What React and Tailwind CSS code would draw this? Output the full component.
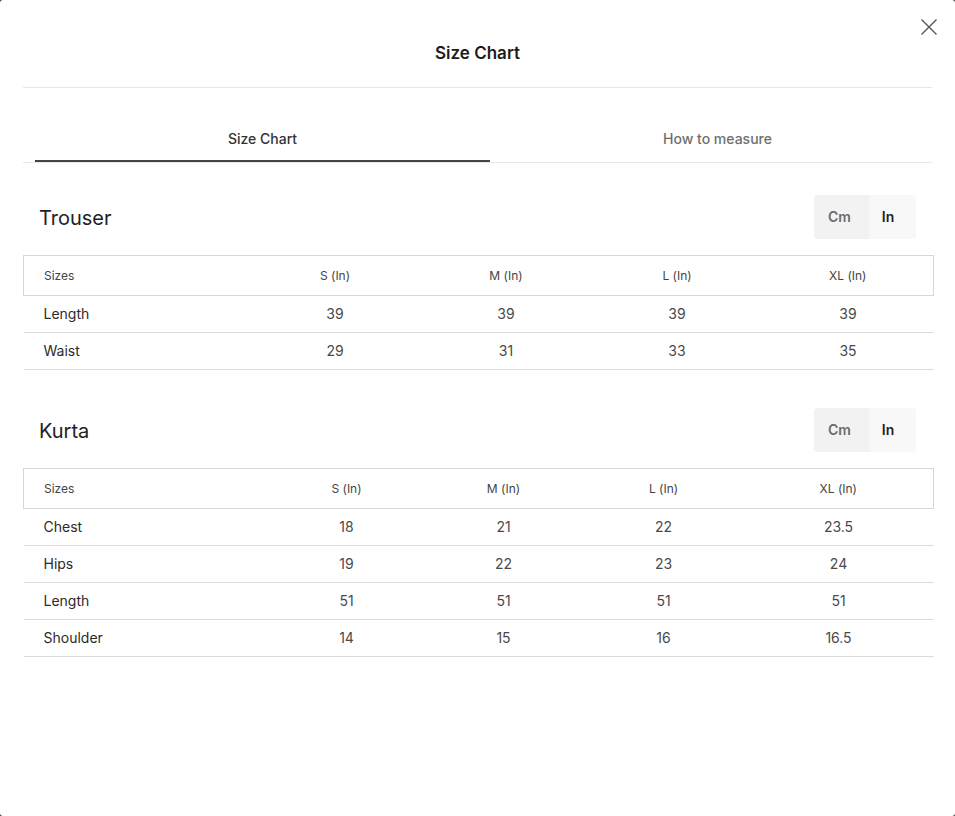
import { useState } from "react";

const charts = [
  {
    name: "Trouser",
    cols: ["226px", "171px", "171px", "171px", "171px"],
    rows: [
      ["Length", "39", "39", "39", "39"],
      ["Waist", "29", "31", "33", "35"],
    ],
  },
  {
    name: "Kurta",
    cols: ["246px", "154px", "160px", "160px", "190px"],
    rows: [
      ["Chest", "18", "21", "22", "23.5"],
      ["Hips", "19", "22", "23", "24"],
      ["Length", "51", "51", "51", "51"],
      ["Shoulder", "14", "15", "16", "16.5"],
    ],
  },
];

const sizes = ["S", "M", "L", "XL"];

const UnitToggle = () => {
  return (
    <div className="flex h-11 rounded-[4px] overflow-hidden text-sm font-semibold">
      <button className="w-[55px] pr-1 bg-[#f2f2f2] text-[#6b6b6b]">Cm</button>
      <button className="w-[47px] pr-[9px] bg-[#f8f8f8] text-[#222]">In</button>
    </div>
  );
};

const Chart = ({ chart, first }) => {
  return (
    <section className={first ? "mt-8" : "mt-[38px]"}>
      <div className="flex items-center justify-between px-4 h-11">
        <h2 className="text-[20px] text-[#222] pt-[2px]">{chart.name}</h2>
        <UnitToggle />
      </div>
      <table className="table-fixed w-full mt-4 border-collapse">
        <colgroup>
          {chart.cols.map((w, i) => (
            <col key={i} style={{ width: w }} />
          ))}
        </colgroup>
        <thead>
          <tr className="h-10 border border-[#d6d6d6] text-xs text-[#444]">
            <th className="text-left font-normal pl-5">Sizes</th>
            {sizes.map((s) => (
              <th key={s} className="font-normal text-center">
                {s} (In)
              </th>
            ))}
          </tr>
        </thead>
        <tbody>
          {chart.rows.map((row) => (
            <tr key={row[0]} className="h-[37px] border-b border-[#dcdcdc] text-sm">
              <td className="pl-5 text-[#2b2b2b]">{row[0]}</td>
              {row.slice(1).map((v, i) => (
                <td key={i} className="text-center text-[#4a4a4a]">
                  {v}
                </td>
              ))}
            </tr>
          ))}
        </tbody>
      </table>
    </section>
  );
};

const App = () => {
  const [tab, setTab] = useState(0);

  return (
    <div className="bg-[#3a3a3a] min-h-screen font-['Inter',sans-serif]">
      <div className="relative bg-white rounded-[3px] w-[955px] h-[816px] px-[23px]">
        <button className="absolute top-[18px] right-[17px] text-[#555]">
          <svg width="18" height="18" viewBox="0 0 18 18" fill="none" stroke="currentColor" strokeWidth="1.4">
            <path d="M1.5 1.5l15 15M16.5 1.5l-15 15" />
          </svg>
        </button>
        <header className="h-[88px] pt-[21px] flex items-center justify-center border-b border-[#e6e6e6]">
          <h1 className="text-[17px] font-semibold text-[#1c1c1c]">Size Chart</h1>
        </header>

        <nav className="flex mt-[28px] border-b border-[#e8e8e8]">
          <div className="flex shrink-0 ml-3 w-[910px]">
            {["Size Chart", "How to measure"].map((t, i) => (
              <button
                key={t}
                onClick={() => setTab(i)}
                className={
                  "flex-1 h-[46px] pt-[2px] text-sm font-medium border-b-2 " +
                  (tab === i
                    ? "border-[#444] text-[#333]"
                    : "border-transparent text-[#6e6e6e]")
                }
              >
                {t}
              </button>
            ))}
          </div>
        </nav>

        {charts.map((c, i) => (
          <Chart key={c.name} chart={c} first={i === 0} />
        ))}
      </div>
    </div>
  );
};

export default App;
